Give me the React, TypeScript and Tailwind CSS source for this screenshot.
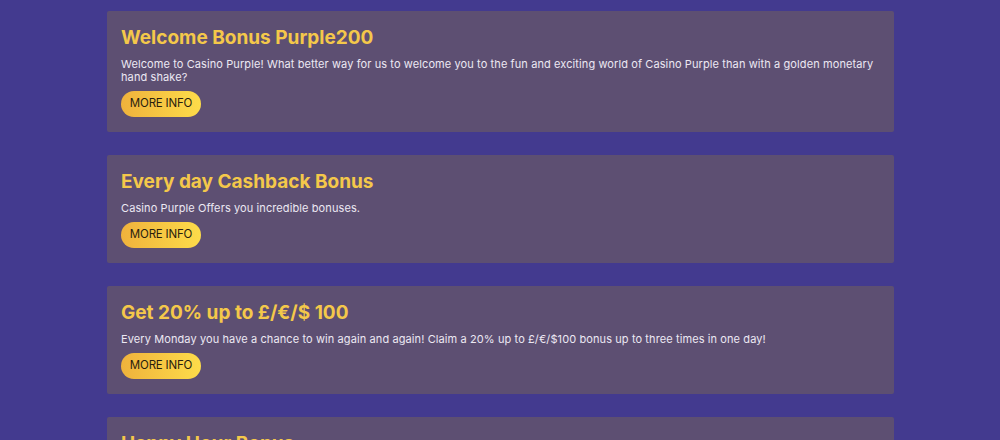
import React from 'react'

type Promo = {
  title: string
  text: string
}

const promos: Promo[] = [
  {
    title: 'Welcome Bonus Purple200',
    text: 'Welcome to Casino Purple! What better way for us to welcome you to the fun and exciting world of Casino Purple than with a golden monetary hand shake?',
  },
  {
    title: 'Every day Cashback Bonus',
    text: 'Casino Purple Offers you incredible bonuses.',
  },
  {
    title: 'Get 20% up to £/€/$ 100',
    text: 'Every Monday you have a chance to win again and again! Claim a 20% up to £/€/$100 bonus up to three times in one day!',
  },
  {
    title: 'Happy Hour Bonus',
    text: 'Play during our happy hours and get extra bonus credits on every deposit.',
  },
]

function PromoCard({ promo }: { promo: Promo }) {
  return (
    <div className="bg-[#5d4f72] rounded-[2px] pt-[15px] pb-[15px] px-[14px]">
      <h2 className="text-[#f4c84a] text-[19px] leading-[24px] font-bold">{promo.title}</h2>
      <p className="mt-[8px] text-[#ece8f2] text-[11px] leading-[13px] tracking-[0.1px]">{promo.text}</p>
      <button className="mt-[7px] h-[26px] w-[80px] rounded-full bg-gradient-to-r from-[#efb23c] to-[#fddc4a] text-[#2a1e0e] text-[11.5px] leading-none tracking-[-0.2px]">
        MORE INFO
      </button>
    </div>
  )
}

export default function App() {
  return (
    <div
      className="h-[440px] overflow-hidden bg-[#433a8f]"
      style={{ fontFamily: 'Inter, "Noto Sans", sans-serif' }}
    >
      <div className="w-[787px] ml-[107px] pt-[11px] flex flex-col gap-[23px]">
        {promos.map(p => (
          <PromoCard key={p.title} promo={p} />
        ))}
      </div>
    </div>
  )
}
